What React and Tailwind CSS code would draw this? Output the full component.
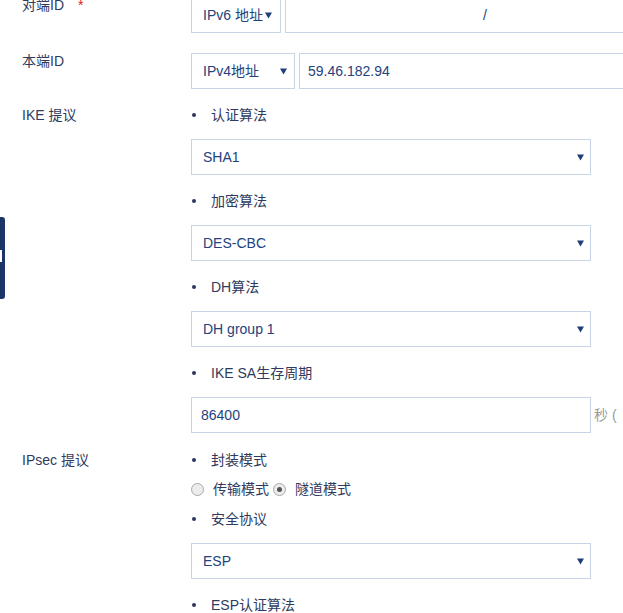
import React from "react";

const Arrow = () => (
  <svg width="7" height="7" viewBox="0 0 7 7" className="shrink-0">
    <path d="M0 0.5 H7 L3.5 6.5 Z" fill="#1f3f7a" />
  </svg>
);

const Select = ({ value, className = "" }) => (
  <div
    className={`h-[36px] border border-[#c8d3e6] bg-white flex items-center justify-between pl-[11px] text-[#23427e] ${className}`}
  >
    <span className="whitespace-nowrap">{value}</span>
    <Arrow />
  </div>
);

const Bullet = ({ children }) => (
  <div className="h-[20px] flex items-center text-[#2f3a5e] whitespace-nowrap">
    <span className="w-[4px] h-[4px] rounded-full bg-[#2b3566] ml-[1px]" />
    <span className="ml-[15px] leading-[20px]">{children}</span>
  </div>
);

const Radio = ({ checked }) => (
  <span className="w-[13px] h-[13px] rounded-full border border-[#a8a8a8] bg-[#ececec] flex items-center justify-center shrink-0">
    {checked && <span className="w-[5px] h-[5px] rounded-full bg-[#555]" />}
  </span>
);

const Label = ({ children }) => (
  <div className="w-[191px] shrink-0 pl-[22px] leading-[20px] text-[#2f3a5e] whitespace-nowrap">
    {children}
  </div>
);

export default function App() {
  return (
    <div className="relative w-[623px] h-[613px] overflow-hidden bg-white text-[14px] font-['Liberation_Sans','Noto_Sans_CJK_SC',sans-serif]">
      <div className="absolute left-0 top-[217px] w-[5px] h-[82px] rounded-r-[3px] bg-[#1c3466]">
        <div className="absolute left-0 top-[33px] w-[2px] h-[12px] bg-white" />
      </div>

      <div className="-mt-[5px] flex flex-col">
        {/* 对端ID */}
        <div className="flex">
          <Label>
            对端ID<span className="ml-[14px] text-[#e02020]">*</span>
          </Label>
          <div className="pt-[2px] flex gap-[4px]">
            <Select value="IPv6 地址" className="w-[90px] pr-[8px]" />
            <div className="h-[36px] w-[400px] border border-[#c8d3e6] flex items-center pl-[197px] text-[#23427e]">
              /
            </div>
          </div>
        </div>

        {/* 本端ID */}
        <div className="flex mt-[18px]">
          <Label>本端ID</Label>
          <div className="pt-[2px] flex gap-[4px]">
            <Select value="IPv4地址" className="w-[104px] pr-[7px]" />
            <div className="h-[36px] w-[400px] border border-[#c8d3e6] flex items-center pl-[8px] text-[#23427e]">
              59.46.182.94
            </div>
          </div>
        </div>

        {/* IKE 提议 */}
        <div className="flex mt-[16px]">
          <Label>IKE 提议</Label>
          <div className="flex flex-col">
            <Bullet>认证算法</Bullet>
            <Select value="SHA1" className="w-[400px] mt-[14px] pr-[6px]" />
            <div className="mt-[16px]">
              <Bullet>加密算法</Bullet>
            </div>
            <Select value="DES-CBC" className="w-[400px] mt-[14px] pr-[6px]" />
            <div className="mt-[16px]">
              <Bullet>DH算法</Bullet>
            </div>
            <Select value="DH group 1" className="w-[400px] mt-[14px] pr-[6px]" />
            <div className="mt-[16px]">
              <Bullet>IKE SA生存周期</Bullet>
            </div>
            <div className="mt-[14px] flex items-center whitespace-nowrap">
              <div className="h-[36px] w-[400px] shrink-0 border border-[#c8d3e6] flex items-center pl-[9px] text-[#23427e]">
                86400
              </div>
              <span className="ml-[3px] text-[#9a9a9a]">秒 (</span>
            </div>
          </div>
        </div>

        {/* IPsec 提议 */}
        <div className="flex mt-[17px]">
          <Label>IPsec 提议</Label>
          <div className="flex flex-col">
            <Bullet>封装模式</Bullet>
            <div className="mt-[9px] h-[20px] flex items-center whitespace-nowrap text-[#2f3a5e]">
              <Radio />
              <span className="ml-[9px]">传输模式</span>
              <span className="ml-[4px]">
                <Radio checked />
              </span>
              <span className="ml-[9px]">隧道模式</span>
            </div>
            <div className="mt-[10px]">
              <Bullet>安全协议</Bullet>
            </div>
            <Select value="ESP" className="w-[400px] mt-[14px] pr-[6px]" />
            <div className="mt-[16px]">
              <Bullet>ESP认证算法</Bullet>
            </div>
          </div>
        </div>
      </div>
    </div>
  );
}
